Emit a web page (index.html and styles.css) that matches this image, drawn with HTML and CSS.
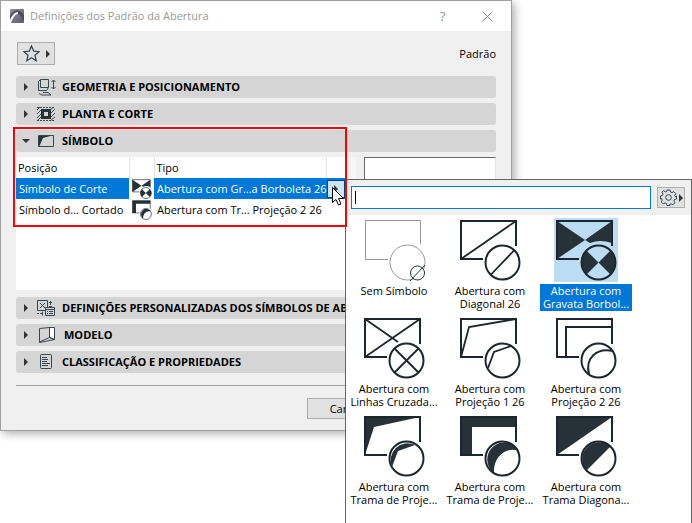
FILE: index.html
```html
<!DOCTYPE html>
<html lang="pt">
<head>
  <meta charset="UTF-8">
  <meta name="viewport" content="width=device-width, initial-scale=1.0">
  <title>Definições dos Padrão da Abertura</title>
  <link rel="stylesheet" href="styles.css">
</head>
<body>
  <!-- Shared symbols, used by the table and by the picker -->
  <svg class="sprite" aria-hidden="true">
    <symbol id="frame" viewBox="0 0 64 64">
      <path d="M58 28V3H3v38h22" fill="none" stroke="#1c272d" stroke-width="2"/>
      <circle cx="44.5" cy="44.5" r="17" fill="none" stroke="#1c272d" stroke-width="2"/>
    </symbol>
    <symbol id="bowtie" viewBox="0 0 64 64">
      <path d="M3 3l28 19L3 41zM58 3L31 22l5 3q10-4 22 0z" fill="#263238"/>
      <path d="M32.500 32.500a17 17 0 0 0 0 24l12-12zM56.500 32.500a17 17 0 0 1 0 24l-12-12z" fill="#263238"/>
      <use href="#frame"/>
    </symbol>
    <symbol id="projection" viewBox="0 0 64 64">
      <path d="M3 3h55v10H14v28H3z" fill="#263238"/>
      <path d="M61 37C49 32 35 42 36 59A17 17 0 1 1 61 37z" fill="#263238"/>
      <use href="#frame"/>
    </symbol>
    <symbol id="arrow" viewBox="0 0 4 8">
      <path d="M0 0l4 4-4 4z" fill="#333"/>
    </symbol>
  </svg>

  <main class="desktop">
    <div class="dialog">
      <header class="titlebar">
        <svg class="app-icon" viewBox="0 0 14 14">
          <defs>
            <linearGradient id="logo" x1="0" y1="0" x2="1" y2="1">
              <stop offset="0" stop-color="#9290a0"/>
              <stop offset="1" stop-color="#5c5b6b"/>
            </linearGradient>
          </defs>
          <rect width="14" height="14" rx="1" fill="url(#logo)"/>
          <path d="M0 12C1 6 5 2 8 3c3 1 5 4 6 8" fill="none" stroke="#4c4b59" stroke-width="3"/>
          <path d="M0 14C2 8 4 4 8 4" fill="none" stroke="#fff" stroke-width="2"/>
        </svg>
        <h1>Definições dos Padrão da Abertura</h1>
        <button class="title-button" type="button">?</button>
        <button class="title-button" type="button" aria-label="Fechar">
          <svg width="11" height="11" viewBox="0 0 11 11"><path d="M.5.5l10 10M10.500.5l-10 10" stroke="#888" fill="none"/></svg>
        </button>
      </header>

      <div class="dialog-body">
        <div class="toolbar">
          <button class="favorites" type="button" aria-label="Favoritos">
            <svg width="17" height="17" viewBox="0 0 17 17"><path d="M8.500 1l2.200 5.200 5.300.5-4 3.600 1.200 5.400-4.700-2.900-4.700 2.900L5 10.300 1 6.700l5.300-.5z" fill="none" stroke="#37474f" stroke-width="1.300"/></svg>
            <svg class="arrow"><use href="#arrow"/></svg>
          </button>
          <span>Padrão</span>
        </div>

        <div class="sections">
          <button class="section" type="button">
            <svg class="arrow"><use href="#arrow"/></svg>
            <svg class="section-icon" viewBox="0 0 20 18" fill="none" stroke="#37474f">
              <path d="M3.500 1.500h8v8h-8zM3.500 1.500l-2 2v9h8l2-3M1.500 3.500v9M2 15.500l3 1.500h9l-3-2.500H6M16.500 2v9M14.500 4l2-2 2 2M14.500 9l2 2 2-2"/>
            </svg>
            <span>GEOMETRIA E POSICIONAMENTO</span>
          </button>
          <button class="section" type="button">
            <svg class="arrow"><use href="#arrow"/></svg>
            <svg class="section-icon" viewBox="0 0 20 18" fill="none" stroke="#37474f">
              <path d="M0 5l3-3M0 9l5-5M0 13l5-5M0 16l5-5M13 5l4-3M13 9l5-5M13 13l5-5M13 16l5-4"/>
              <path d="M0 2.500h18M0 15.500h18" stroke-dasharray="2 1"/>
              <path d="M5.500 5.500h7v7h-7z" fill="#d5d5d5" stroke="#263238" stroke-width="3"/>
            </svg>
            <span>PLANTA E CORTE</span>
          </button>
          <button class="section" type="button" aria-expanded="true">
            <svg class="arrow open"><use href="#arrow"/></svg>
            <svg class="section-icon" viewBox="0 0 20 18">
              <path d="M2 3h15L6 6l-4 9z" fill="#263238"/>
              <path d="M1.500 3.500h15v11h-15z" fill="none" stroke="#37474f"/>
            </svg>
            <span>SÍMBOLO</span>
          </button>

          <div class="symbol-panel">
            <div class="list">
              <table>
                <colgroup><col class="col-name"><col class="col-icon"><col><col class="col-menu"></colgroup>
                <thead>
                  <tr><th>Posição</th><th></th><th>Tipo</th><th></th></tr>
                </thead>
                <tbody>
                  <tr class="selected">
                    <td>Símbolo de Corte</td>
                    <td class="icon-cell"><svg class="mini" viewBox="2 1 61 62"><use href="#bowtie" width="64" height="64"/></svg></td>
                    <td>Abertura com Gr...a Borboleta 26</td>
                    <td class="menu-cell"><button class="menu-button" type="button" aria-label="Escolher"><svg class="arrow"><use href="#arrow"/></svg></button></td>
                  </tr>
                  <tr>
                    <td>Símbolo d... Cortado</td>
                    <td class="icon-cell"><svg class="mini" viewBox="2 1 61 62"><use href="#projection" width="64" height="64"/></svg></td>
                    <td>Abertura com Tr... Projeção 2 26</td>
                    <td></td>
                  </tr>
                </tbody>
              </table>
            </div>
            <div class="splitter"></div>
            <div class="preview"></div>
          </div>

          <button class="section" type="button">
            <svg class="arrow"><use href="#arrow"/></svg>
            <svg class="section-icon" viewBox="0 0 20 18" fill="none" stroke="#37474f">
              <path d="M.5 1.500h10v10H.5zM3 4l5 5M8 4L3 9M13.500 2v4M12 3.500h3M12 7.500h3M0 14.500h2M5.500 12.500v4M3 14.500h2"/>
              <path d="M8.500 8.500h9v8h-9z" fill="#d5d5d5"/>
              <path d="M8.500 10.500h9M10 12.500h1M12 12.500h4M10 14.500h1M12 14.500h4"/>
            </svg>
            <span>DEFINIÇÕES PERSONALIZADAS DOS SÍMBOLOS DE ABERTURA</span>
          </button>
          <button class="section" type="button">
            <svg class="arrow"><use href="#arrow"/></svg>
            <svg class="section-icon wide" viewBox="0 0 20 18" fill="none" stroke="#37474f">
              <path d="M10.500 1.500h5v12l-5-2z" fill="#fff"/>
              <path d="M.5 2.500l10-1v10l5 2-15 3zM.5 16l10-4.500"/>
            </svg>
            <span>MODELO</span>
          </button>
          <button class="section" type="button">
            <svg class="arrow"><use href="#arrow"/></svg>
            <svg class="section-icon" viewBox="0 0 20 18" fill="none" stroke="#37474f">
              <rect x="3.500" y="1.500" width="11" height="14" rx="1"/>
              <path d="M5 4.500h5M5 6.500h6M5 8.500h5M5 10.500h8M5 12.500h6"/>
            </svg>
            <span>CLASSIFICAÇÃO E PROPRIEDADES</span>
          </button>
        </div>

        <footer class="actions">
          <button type="button">Cancelar</button>
          <button type="button">OK</button>
        </footer>
      </div>
    </div>

    <div class="picker">
      <div class="picker-head">
        <label class="search"><input type="text" aria-label="Procurar"></label>
        <button class="gear" type="button" aria-label="Opções">
          <svg width="17" height="17" viewBox="0 0 17 17" fill="none" stroke="#37474f">
            <path d="M7 1h3l.5 2 1.500.6 1.800-1 2 2-1 1.800.6 1.500L16.500 7v3l-2 .5-.6 1.500 1 1.800-2 2-1.800-1-1.500.6L10 16.500H7l-.5-2-1.500-.6-1.800 1-2-2 1-1.800-.6-1.500L.5 10V7l2-.5L3 5 2 3.200l1.500-1.500L5.300 2.900 6.500 2.700z"/>
            <circle cx="8.500" cy="8.500" r="2.800"/>
          </svg>
          <svg class="arrow"><use href="#arrow"/></svg>
        </button>
      </div>
      <div class="tiles">
        <button class="tile" type="button">
          <svg class="tile-icon" viewBox="0 0 64 64" fill="none" stroke="#999">
            <path d="M58.500 26V2.500h-55v39H26"/>
            <circle cx="45.500" cy="44.500" r="17.500"/>
            <circle cx="55.500" cy="55" r="7" fill="#fff" stroke="#263238"/>
            <path d="M48 63l15-16" stroke="#263238"/>
          </svg>
          <span>Sem Símbolo</span>
        </button>
        <button class="tile" type="button">
          <svg class="tile-icon" viewBox="0 0 64 64" fill="none" stroke="#1c272d" stroke-width="1.800">
            <use href="#frame"/>
            <path d="M3 41L58 3M33 56.500L56 32.500"/>
          </svg>
          <span>Abertura com<br>Diagonal 26</span>
        </button>
        <button class="tile active" type="button">
          <svg class="tile-icon" viewBox="0 0 64 64"><use href="#bowtie"/></svg>
          <span>Abertura com<br>Gravata Borbol...</span>
        </button>
        <button class="tile" type="button">
          <svg class="tile-icon" viewBox="0 0 64 64" fill="none" stroke="#1c272d" stroke-width="1.800">
            <use href="#frame"/>
            <path d="M3 41L58 3M3 3l33 23M32.500 32.500l24 24M56.500 32.500l-24 24"/>
          </svg>
          <span>Abertura com<br>Linhas Cruzada...</span>
        </button>
        <button class="tile" type="button">
          <svg class="tile-icon" viewBox="0 0 64 64" fill="none" stroke="#1c272d" stroke-width="1.800">
            <use href="#frame"/>
            <path d="M3 41l8-30 47-8M30 52l6-16 17-6"/>
          </svg>
          <span>Abertura com<br>Projeção 1 26</span>
        </button>
        <button class="tile" type="button">
          <svg class="tile-icon" viewBox="0 0 64 64" fill="none" stroke="#1c272d" stroke-width="2">
            <use href="#frame"/>
            <path d="M12 41V11h46M35 58C31 43 42 31 59 35"/>
          </svg>
          <span>Abertura com<br>Projeção 2 26</span>
        </button>
        <button class="tile" type="button">
          <svg class="tile-icon" viewBox="0 0 64 64" fill="#263238">
            <path d="M3 3h55l-46 10L3 41zM30 53l6-16 17-6A17 17 0 0 0 30 53z"/>
            <use href="#frame"/>
          </svg>
          <span>Abertura com<br>Trama de Proje...</span>
        </button>
        <button class="tile" type="button">
          <svg class="tile-icon" viewBox="0 0 64 64"><use href="#projection"/></svg>
          <span>Abertura com<br>Trama de Proje...</span>
        </button>
        <button class="tile" type="button">
          <svg class="tile-icon" viewBox="0 0 64 64" fill="#263238">
            <path d="M3 3h55L3 41zM32.500 56.500a17 17 0 0 1 24-24z"/>
            <use href="#frame"/>
          </svg>
          <span>Abertura com<br>Trama Diagona...</span>
        </button>
      </div>
    </div>

    <div class="highlight"></div>
    <svg class="cursor" viewBox="0 0 12 19"><path d="M.5.5v15l3.500-3 2.500 5.500 2.500-1-2.500-5.500h5z" fill="#fff" stroke="#000"/></svg>
  </main>
</body>
</html>
```
FILE: styles.css
```css
* {
  box-sizing: border-box;
}

body {
  margin: 0;
  background-color: #fff;
  color: #000;
  font-family: "Open Sans", "Noto Sans", sans-serif;
  font-size: 11px;
  line-height: 13px;
}

button,
input {
  font: inherit;
  color: inherit;
}

button {
  padding: 0;
  cursor: pointer;
}

svg {
  display: block;
  flex: none;
}

.sprite {
  position: absolute;
  width: 0;
  height: 0;
}

.desktop {
  position: relative;
  min-height: 100vh;
  overflow: hidden;
}

.arrow {
  width: 4px;
  height: 8px;
}

.arrow.open {
  transform: rotate(90deg);
}

/* Dialog window */
.dialog {
  margin-right: 180px;
  border: 1px solid #a0a0a0;
  background-color: #f0f0f0;
  box-shadow: 3px 3px 8px rgba(0, 0, 0, 0.3);
}

.titlebar {
  display: flex;
  align-items: center;
  height: 30px;
  padding: 0 1px 0 9px;
  background-color: #fff;
  color: #999;
}

.app-icon {
  width: 14px;
  height: 14px;
}

h1 {
  flex: 1;
  margin: 0 0 0 6px;
  padding-bottom: 2px;
  font-size: 11px;
  font-weight: normal;
}

.title-button {
  display: flex;
  align-items: center;
  justify-content: center;
  width: 45px;
  height: 30px;
  border: 0;
  background: none;
  font-size: 13px;
}

.dialog-body {
  padding: 11px 15px;
}

.toolbar {
  display: flex;
  align-items: center;
  justify-content: space-between;
  margin-bottom: 11px;
  padding-left: 1px;
}

.favorites {
  display: flex;
  align-items: center;
  justify-content: center;
  gap: 6px;
  width: 38px;
  height: 23px;
  border: 1px solid #adadad;
  background-color: #e1e1e1;
}

.sections {
  display: flex;
  flex-direction: column;
  gap: 5px;
}

.section {
  display: flex;
  align-items: center;
  width: 100%;
  height: 22px;
  padding-left: 8px;
  border: 0;
  border-radius: 3px;
  background-color: #d5d5d5;
  font-weight: bold;
  white-space: nowrap;
  overflow: hidden;
}

.section span {
  padding-bottom: 2px;
}

.section-icon {
  width: 20px;
  height: 18px;
  margin: 0 5px 0 9px;
}

.section-icon.wide {
  margin-left: 11px;
}

.symbol-panel {
  display: flex;
  height: 133px;
  margin-bottom: 2px;
}

.list {
  flex: 1;
  background-color: #fff;
}

.splitter {
  width: 5px;
  margin: 0 8px 0 5px;
  background-color: #f7f7f7;
}

.preview {
  width: 132px;
  border: 1px solid #e3e3e3;
  border-top-color: #696969;
  border-left-color: #696969;
  background-color: #fff;
}

table {
  width: 100%;
  border-collapse: collapse;
  table-layout: fixed;
}

.col-name {
  width: 113px;
}

.col-icon {
  width: 25px;
}

.col-menu {
  width: 20px;
}

th,
td {
  height: 21px;
  padding: 0 0 0 3px;
  text-align: left;
  font-weight: normal;
  white-space: nowrap;
}

th {
  padding-left: 2px;
  border-right: 1px solid #e5e5e5;
}

th:last-child {
  border-right: 0;
}

.selected {
  background-color: #0078d7;
  color: #fff;
}

.icon-cell {
  background-color: #fff;
}

.mini {
  width: 20px;
  height: 20px;
}

.menu-cell {
  padding: 0;
}

.menu-button {
  display: flex;
  align-items: center;
  justify-content: center;
  width: 18px;
  height: 18px;
  margin-left: 1px;
  border: 1px solid #00447a;
  background-color: #cce4f7;
}

.actions {
  display: flex;
  justify-content: flex-end;
  gap: 9px;
  margin-top: 12px;
  padding-top: 12px;
  border-top: 1px solid #a0a0a0;
}

.actions button {
  width: 90px;
  height: 21px;
  border: 1px solid #adadad;
  background-color: #e1e1e1;
}

/* Symbol picker, opened over the dialog */
.picker {
  position: absolute;
  top: 179px;
  right: 0;
  bottom: 0;
  left: 345px;
  border: 1px solid #646464;
  border-bottom: 0;
  background-color: #fff;
}

.picker-head {
  display: flex;
  align-items: center;
  gap: 6px;
  height: 35px;
  padding: 0 6px 0 5px;
  background-color: #f0f0f0;
}

.search {
  position: relative;
  flex: 1;
}

.search::before {
  content: "";
  position: absolute;
  top: 5px;
  left: 4px;
  width: 1px;
  height: 13px;
  background-color: #000;
}

.search input {
  display: block;
  width: 100%;
  height: 23px;
  padding: 0 4px;
  border: 1px solid #0078d7;
  background-color: #fff;
}

.gear {
  display: flex;
  align-items: center;
  justify-content: center;
  gap: 2px;
  width: 28px;
  height: 21px;
  border: 1px solid #adadad;
  background-color: #e1e1e1;
}

.tiles {
  display: grid;
  grid-template-columns: repeat(auto-fill, 96px);
  grid-auto-rows: 98px;
  padding-top: 3px;
}

.tile {
  display: flex;
  flex-direction: column;
  align-items: center;
  gap: 2px;
  border: 0;
  background: none;
}

.tile-icon {
  width: 64px;
  height: 64px;
}

.tile span {
  width: 92px;
  padding-bottom: 1px;
  white-space: nowrap;
}

.active .tile-icon {
  background-color: #bcdcf4;
}

.active span {
  background-color: #0078d7;
  color: #fff;
}

.highlight {
  position: absolute;
  top: 127px;
  left: 13px;
  width: 334px;
  height: 100px;
  border: 2px solid #f00;
  pointer-events: none;
}

.cursor {
  position: absolute;
  top: 187px;
  left: 332px;
  width: 12px;
  height: 19px;
}
```
